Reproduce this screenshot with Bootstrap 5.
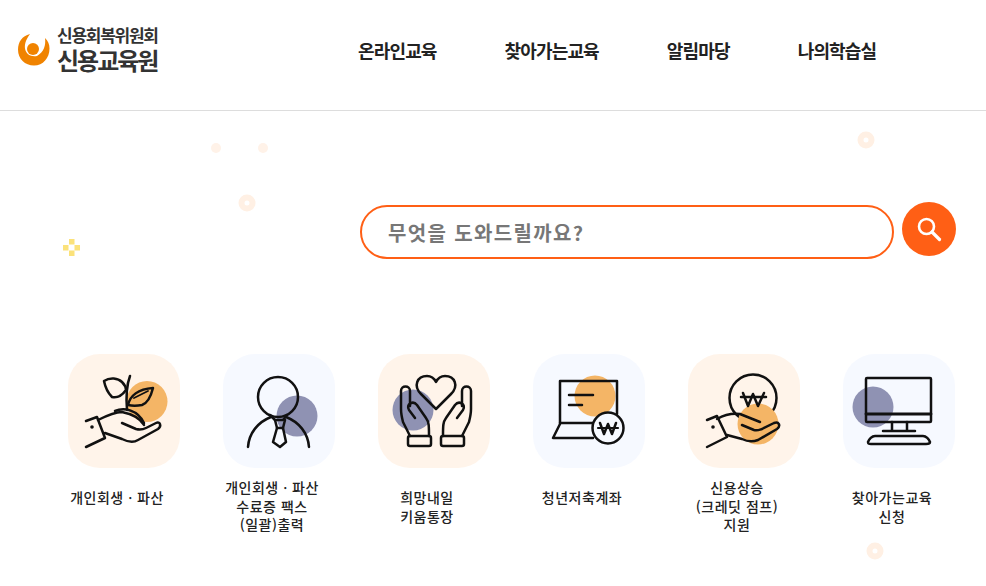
<!DOCTYPE html>
<html lang="ko">
<head>
  <meta charset="UTF-8" />
  <meta name="viewport" content="width=device-width, initial-scale=1.0" />
  <title>신용교육원</title>
  <link rel="stylesheet" href="https://cdn.jsdelivr.net/npm/bootstrap@5.3.2/dist/css/bootstrap.min.css">
  <style>
    html, body { height: 586px; overflow: hidden; }
    body { font-family: "Noto Sans CJK KR", "Noto Sans", sans-serif; color: #222; position: relative; }
    .site-head { height: 111px; border-bottom: 1px solid #ddd; padding: 0 0 11px 18px; }
    .site-logo { width: 340px; color: #333; text-decoration: none; gap: 7px; }
    .logo-top { font-size: 17px; font-weight: 700; letter-spacing: -1.25px; line-height: 19px; }
    .logo-main { font-size: 24px; font-weight: 700; letter-spacing: -2px; line-height: 28px; margin-top: 2px; }
    .site-menu { gap: 68px; }
    .site-menu a { font-size: 18px; font-weight: 700; letter-spacing: -.85px; color: #222; text-decoration: none; line-height: 24px; }
    .search-row { padding: 91px 30px 0 0; height: 243px; }
    .search-box { width: 534px; height: 54px; margin-top: 3px; border: 2px solid #ff5f15; border-radius: 27px; padding: 0 26px; font-size: 20px; font-weight: 700; letter-spacing: 1.35px; box-shadow: none; }
    .search-box::placeholder { color: #777; opacity: 1; }
    .search-box:focus { border-color: #ff5f15; box-shadow: none; }
    .search-btn { width: 54px; height: 54px; background: #ff5f15; border: 0; margin-left: 8px; padding: 0; }
    .svc-row { padding-left: 46px; }
    .svc-item { width: 155px; text-decoration: none; color: #222; }
    .svc-tile { width: 112px; height: 114px; border-radius: 32px; }
    .tile-warm { background: #fff4ea; }
    .tile-cool { background: #f6f9ff; }
    .svc-label { width: 130px; margin: 20px 13px 0 0; font-size: 14px; font-weight: 500; line-height: 18.5px; letter-spacing: .5px; }
    .svc-label-tall { margin-top: 10px; }
    .svc-icon { fill: none; stroke: #111; stroke-width: 2.5; stroke-linecap: round; stroke-linejoin: round; }
    .blob-orange { fill: #f4b566; stroke: none; }
    .blob-blue { fill: #8f92b3; stroke: none; }
    .deco { position: absolute; }
  </style>
</head>
<body>
  <svg class="deco" style="left:211px;top:143px" width="10" height="10"><circle cx="5" cy="5" r="5" fill="#fff2e8"/></svg>
  <svg class="deco" style="left:258px;top:143px" width="10" height="10"><circle cx="5" cy="5" r="5" fill="#fff2e8"/></svg>
  <svg class="deco" style="left:238px;top:194px" width="18" height="18"><circle cx="9" cy="9" r="5.500" fill="none" stroke="#fff0e4" stroke-width="6"/></svg>
  <svg class="deco" style="left:857px;top:131px" width="18" height="18"><circle cx="9" cy="9" r="5.500" fill="none" stroke="#fff0e4" stroke-width="6"/></svg>
  <svg class="deco" style="left:866px;top:542px" width="18" height="18"><circle cx="9" cy="9" r="5.500" fill="none" stroke="#fff0e4" stroke-width="6"/></svg>
  <svg class="deco" style="left:63px;top:239px" width="17" height="17" fill="#fbe27a"><rect x="6" y="0" width="5.500" height="5.500"/><rect x="0" y="6" width="5.500" height="5.500"/><rect x="11.500" y="6" width="5.500" height="5.500"/><rect x="6" y="11.500" width="5.500" height="5.500"/></svg>

  <header class="site-head d-flex align-items-center">
    <a href="#" class="site-logo d-flex align-items-center">
      <svg width="32" height="33" viewBox="0 0 32 33" class="flex-shrink-0">
        <path fill="#f08300" d="M12 1C4 3 0 9 0 16.500C0 26 7 32.500 16 32.500C25 32.500 31.500 25 31.500 15.500C31.500 11 30 8 27 5C28 12 26 19 19 23C8 25 2 14 12 1Z"/>
        <circle cx="15" cy="16" r="6" fill="#f08300"/>
      </svg>
      <div>
        <div class="logo-top">신용회복위원회</div>
        <div class="logo-main">신용교육원</div>
      </div>
    </a>
    <nav class="site-menu d-flex">
      <a href="#">온라인교육</a>
      <a href="#">찾아가는교육</a>
      <a href="#">알림마당</a>
      <a href="#">나의학습실</a>
    </nav>
  </header>

  <main>
    <form class="search-row d-flex justify-content-end align-items-start">
      <input type="text" class="form-control search-box" placeholder="무엇을 도와드릴까요?">
      <button type="button" class="btn search-btn rounded-circle d-flex align-items-center justify-content-center" aria-label="검색">
        <svg width="26" height="26" viewBox="0 0 26 26" fill="none" stroke="#fff" stroke-width="2.600" stroke-linecap="round"><circle cx="10.500" cy="10.500" r="7.500"/><path d="M16 16L23.500 23.500" stroke-width="3.200"/></svg>
      </button>
    </form>

    <div class="svc-row d-flex">
      <a href="#" class="svc-item d-flex flex-column align-items-center text-center">
        <div class="svc-tile tile-warm">
          <svg class="svc-icon" width="112" height="114" viewBox="0 0 112 114">
            <circle class="blob-orange" cx="79" cy="47.500" r="20.500"/>
            <path d="M62 22C59 30 58 44 59 56"/>
            <path d="M36 27C42 23 50 24 54 28C57 31 58 34 58 36C53 43 49 44 44 43C40 39 37 32 36 27Z"/>
            <path d="M60 51C62 42 70 35 85 34C83 42 80 49 74 51C69 52 64 52 60 51Z"/>
            <path d="M66 44L80 37" stroke-width="1.800"/>
            <path d="M18 67L29 63L37 84L18 93"/>
            <circle cx="24" cy="73" r="1.800" fill="#111" stroke="none"/>
            <path d="M30 66C38 62 46 58 54 58C64 60 72 64 76 71"/>
            <path d="M47 57C56 53 70 56 76 69"/>
            <path d="M54 69L68 75C72 76 74 76 78 74L88 69C92 67 94 72 90 75L70 86C65 89 60 88 54 85L37 79"/>
          </svg>
        </div>
        <div class="svc-label">개인회생ㆍ파산</div>
      </a>

      <a href="#" class="svc-item d-flex flex-column align-items-center text-center">
        <div class="svc-tile tile-cool">
          <svg class="svc-icon" width="112" height="114" viewBox="0 0 112 114">
            <circle class="blob-blue" cx="74" cy="62" r="20.500"/>
            <circle cx="55" cy="43" r="20"/>
            <path d="M25 93C26 79 35 68 48 63M86 93C85 79 76 68 63 63"/>
            <path d="M47 61L52 66H60L64 61"/>
            <path d="M52 66L54 74H60L62 66"/>
            <path d="M54 74L50 88L57 93L63 88L60 74"/>
          </svg>
        </div>
        <div class="svc-label svc-label-tall">개인회생ㆍ파산<br>수료증 팩스<br>(일괄)출력</div>
      </a>

      <a href="#" class="svc-item d-flex flex-column align-items-center text-center">
        <div class="svc-tile tile-warm">
          <svg class="svc-icon" width="112" height="114" viewBox="0 0 112 114">
            <circle class="blob-blue" cx="35" cy="56" r="20.500"/>
            <path d="M58 55L43 40C35 32 39 22 49 22C53 22 56 24 58 28C60 24 63 22 67 22C77 22 81 32 73 40Z"/>
            <g id="careHand">
              <rect x="30" y="82" width="23" height="10" rx="2"/>
              <path d="M32 82L25 68C24 64 23 60 23 55V37C23 31 32 31 32 37V52"/>
              <path d="M37 64L31 56C28 50 35 46 39 51L48 64C51 68 51 72 51 82"/>
            </g>
            <use href="#careHand" transform="translate(116 0) scale(-1 1)"/>
          </svg>
        </div>
        <div class="svc-label">희망내일<br>키움통장</div>
      </a>

      <a href="#" class="svc-item d-flex flex-column align-items-center text-center">
        <div class="svc-tile tile-cool">
          <svg class="svc-icon" width="112" height="114" viewBox="0 0 112 114">
            <circle class="blob-orange" cx="62" cy="42" r="20.500"/>
            <path d="M27 69V27H84V60"/>
            <path d="M27 69H62"/>
            <path d="M36 41H60M36 51H49"/>
            <path d="M27 70L20 84H60"/>
            <circle cx="75" cy="74" r="15.500" fill="#f6f9ff"/>
            <path d="M67 69L71 80L75 70L79 80L83 69" stroke-width="2.500"/>
            <path d="M65 74H85" stroke-width="2.200"/>
          </svg>
        </div>
        <div class="svc-label">청년저축계좌</div>
      </a>

      <a href="#" class="svc-item d-flex flex-column align-items-center text-center">
        <div class="svc-tile tile-warm">
          <svg class="svc-icon" width="112" height="114" viewBox="0 0 112 114">
            <circle cx="65" cy="44" r="23.500"/>
            <circle class="blob-orange" cx="70" cy="70" r="20.500"/>
            <path d="M55 39L60 52L65 40L70 52L76 39"/>
            <path d="M53 43H78"/>
            <path d="M19 66L29 62L39 83L19 93"/>
            <circle cx="25" cy="73" r="1.800" fill="#111" stroke="none"/>
            <path d="M29 65C36 61 44 59 52 60L72 68"/>
            <path d="M54 71L66 76C69 77 71 76 74 75L86 69C91 67 93 72 89 75L70 86C65 88 60 88 54 85L39 81"/>
          </svg>
        </div>
        <div class="svc-label svc-label-tall">신용상승<br>(크레딧 점프)<br>지원</div>
      </a>

      <a href="#" class="svc-item d-flex flex-column align-items-center text-center">
        <div class="svc-tile tile-cool">
          <svg class="svc-icon" width="112" height="114" viewBox="0 0 112 114">
            <circle class="blob-blue" cx="30" cy="53" r="20.500"/>
            <rect x="23" y="24" width="65" height="44" rx="1"/>
            <path d="M23 60H88" stroke-width="2.800"/>
            <path d="M49 68V77M64 68V77M40 77H72"/>
            <path d="M25 88C26 85 29 82 32 82H80C83 82 86 85 87 88C87 90 85 90 83 90H28C26 90 25 90 25 88Z"/>
          </svg>
        </div>
        <div class="svc-label">찾아가는교육<br>신청</div>
      </a>
    </div>
  </main>

  <script src="https://cdn.jsdelivr.net/npm/bootstrap@5.3.2/dist/js/bootstrap.bundle.min.js"></script>
</body>
</html>
